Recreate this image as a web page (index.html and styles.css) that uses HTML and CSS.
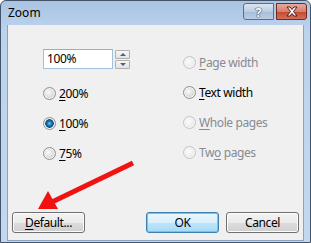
FILE: index.html
```html
<!DOCTYPE html>
<html lang="en">
    <head>
        <title>Zoom</title>
        <meta charset="UTF-8">
        <link rel="stylesheet" href="styles.css">
    </head>
    <body>
        <div class="window">
            <div class="titlebar">
                <span class="title">Zoom</span>
                <span class="cap-btn help">?</span>
                <span class="cap-btn close">
                    <svg width="16" height="11" viewBox="0 0 16 11">
                        <path d="M3 1h3l2 2.5L10 1h3l-3.5 4.5L13 10h-3L8 7.5 6 10H3l3.5-4.5z" fill="#fff" stroke="#4b1d17" stroke-width="1" stroke-linejoin="round"/>
                    </svg>
                </span>
            </div>
            <div class="client">
                <div class="panes">
                    <div class="pane left">
                        <div class="spin">
                            <div class="textbox">100%</div>
                            <div class="spin-btns">
                                <span class="spin-btn"><i class="tri up"></i></span>
                                <span class="spin-btn"><i class="tri down"></i></span>
                            </div>
                        </div>
                        <label class="option first"><span class="radio"></span><span><u>2</u>00%</span></label>
                        <label class="option"><span class="radio checked"></span><span><u>1</u>00%</span></label>
                        <label class="option"><span class="radio"></span><span><u>7</u>5%</span></label>
                    </div>
                    <div class="pane right">
                        <label class="option off"><span class="radio"></span><span><u>P</u>age width</span></label>
                        <label class="option"><span class="radio"></span><span><u>T</u>ext width</span></label>
                        <label class="option off"><span class="radio"></span><span><u>W</u>hole pages</span></label>
                        <label class="option off"><span class="radio"></span><span>Tw<u>o</u> pages</span></label>
                    </div>
                </div>
                <div class="actions">
                    <button class="btn"><u>D</u>efault...</button>
                    <span class="spacer"></span>
                    <button class="btn primary">OK</button>
                    <button class="btn">Cancel</button>
                </div>
            </div>
            <svg class="arrow" width="311" height="243" viewBox="0 0 311 243">
                <line x1="133" y1="163" x2="52" y2="202" stroke="#f21212" stroke-width="5"/>
                <polygon points="38,209 58,209 48,191" fill="#f21212"/>
            </svg>
        </div>
    </body>
</html>
```

FILE: styles.css
```css
body {
    margin: 0;
    padding: 0;
    font-family: "Noto Sans", "Open Sans", sans-serif;
    font-size: 12px;
    letter-spacing: -0.4px;
}
u {
    text-decoration: underline;
    text-underline-offset: 2px;
}
.window {
    position: relative;
    box-sizing: border-box;
    width: 311px;
    height: 243px;
    border: 1px solid #43536a;
    border-radius: 6px 6px 0 0;
    padding: 0 6px 1px 6px;
    background: linear-gradient(#a9c4e2, #bcd3ed 30px, #c3d8ee);
    display: flex;
    flex-direction: column;
}
.titlebar {
    height: 24px;
    display: flex;
    align-items: center;
    padding-left: 1px;
    margin-right: -3px;
}
.title {
    flex: 1;
    color: #000;
    font-size: 12px;
    letter-spacing: 0;
    padding-bottom: 2px;
}
.cap-btn {
    box-sizing: border-box;
    height: 17px;
    margin-top: -3px;
    border: 1px solid #5a6e8b;
    display: flex;
    align-items: center;
    justify-content: center;
}
.help {
    width: 31px;
    border-radius: 3px 0 0 3px;
    margin-right: 2px;
    background: linear-gradient(#d9e5f3, #bccde3 50%, #a8bdd8 51%, #b9cde5);
    color: #fff;
    font-weight: bold;
    font-size: 13px;
    text-shadow: 0 0 1px #283e5c, 0 0 1px #283e5c, 0 0 1px #283e5c;
}
.close {
    width: 31px;
    border-color: #6d2a22;
    border-radius: 0 3px 3px 0;
    background: linear-gradient(#e8a89b, #d57f6e 50%, #c8462f 51%, #d1705c);
}
.client {
    flex: 1;
    background: #f0f0f0;
    border: 1px solid #8ba3c2;
    border-top: none;
    display: flex;
    flex-direction: column;
}
.panes {
    display: flex;
}
.pane {
    display: flex;
    flex-direction: column;
}
.left {
    width: 140px;
    padding-left: 35px;
    padding-top: 24px;
}
.right {
    padding-top: 29px;
}
.spin {
    display: flex;
    gap: 2px;
}
.textbox {
    box-sizing: border-box;
    width: 70px;
    height: 20px;
    border: 1px solid #a2c1e0;
    border-top-color: #8fb0d6;
    background: #fff;
    padding: 1px 3px;
    line-height: 16px;
    color: #000;
}
.spin-btns {
    display: flex;
    flex-direction: column;
    gap: 1px;
    padding-top: 1px;
}
.spin-btn {
    box-sizing: border-box;
    width: 15px;
    height: 9px;
    border: 1px solid #b0b0b0;
    border-radius: 1px;
    background: linear-gradient(#f6f6f6, #e2e2e2);
    display: flex;
    align-items: center;
    justify-content: center;
}
.tri {
    width: 0;
    height: 0;
    border-left: 3px solid transparent;
    border-right: 3px solid transparent;
}
.tri.up {
    border-bottom: 3px solid #4d6185;
}
.tri.down {
    border-top: 3px solid #4d6185;
}
.option {
    height: 16px;
    display: flex;
    align-items: center;
    gap: 3px;
    color: #000;
    margin-bottom: 14px;
}
.left .option.first {
    margin-top: 16px;
}
.option.off {
    color: #858a94;
}
.radio {
    box-sizing: border-box;
    width: 13px;
    height: 13px;
    border-radius: 50%;
    border: 1px solid #8f9090;
    background: radial-gradient(circle at 40% 40%, #fafafa, #d8d8d8 60%, #c6c6c6);
    box-shadow: inset 0 0 0 1px #f4f4f4;
}
.option.off .radio {
    border-color: #c4c4c4;
    background: radial-gradient(circle at 40% 40%, #fbfbfb, #ececec 60%, #e0e0e0);
}
.radio.checked {
    background: radial-gradient(circle, #6fd0f4 0, #1e7fb8 2px, #0a4a7e 4px, #f2f2f2 5px, #dcdcdc 6px);
}
.actions {
    margin-top: auto;
    display: flex;
    gap: 7px;
    padding: 0 4px 7px 4px;
}
.spacer {
    flex: 1;
}
.btn {
    box-sizing: border-box;
    width: 73px;
    height: 21px;
    border: 1px solid #707070;
    border-radius: 3px;
    background: linear-gradient(#f2f2f2, #ebebeb 50%, #dddddd 51%, #cfcfcf);
    box-shadow: inset 0 0 0 1px #fcfcfc;
    font-family: "Noto Sans", "Open Sans", sans-serif;
    font-size: 12px;
    letter-spacing: -0.4px;
    color: #000;
    padding: 0;
    line-height: 17px;
}
.btn.primary {
    border-color: #3c7fb1;
    background: linear-gradient(#eaf6fd, #d9f0fc 50%, #bee6fd 51%, #a7d9f5);
    box-shadow: inset 0 0 0 1px #48d8fb;
}
.arrow {
    position: absolute;
    left: -1px;
    top: -1px;
}
```
